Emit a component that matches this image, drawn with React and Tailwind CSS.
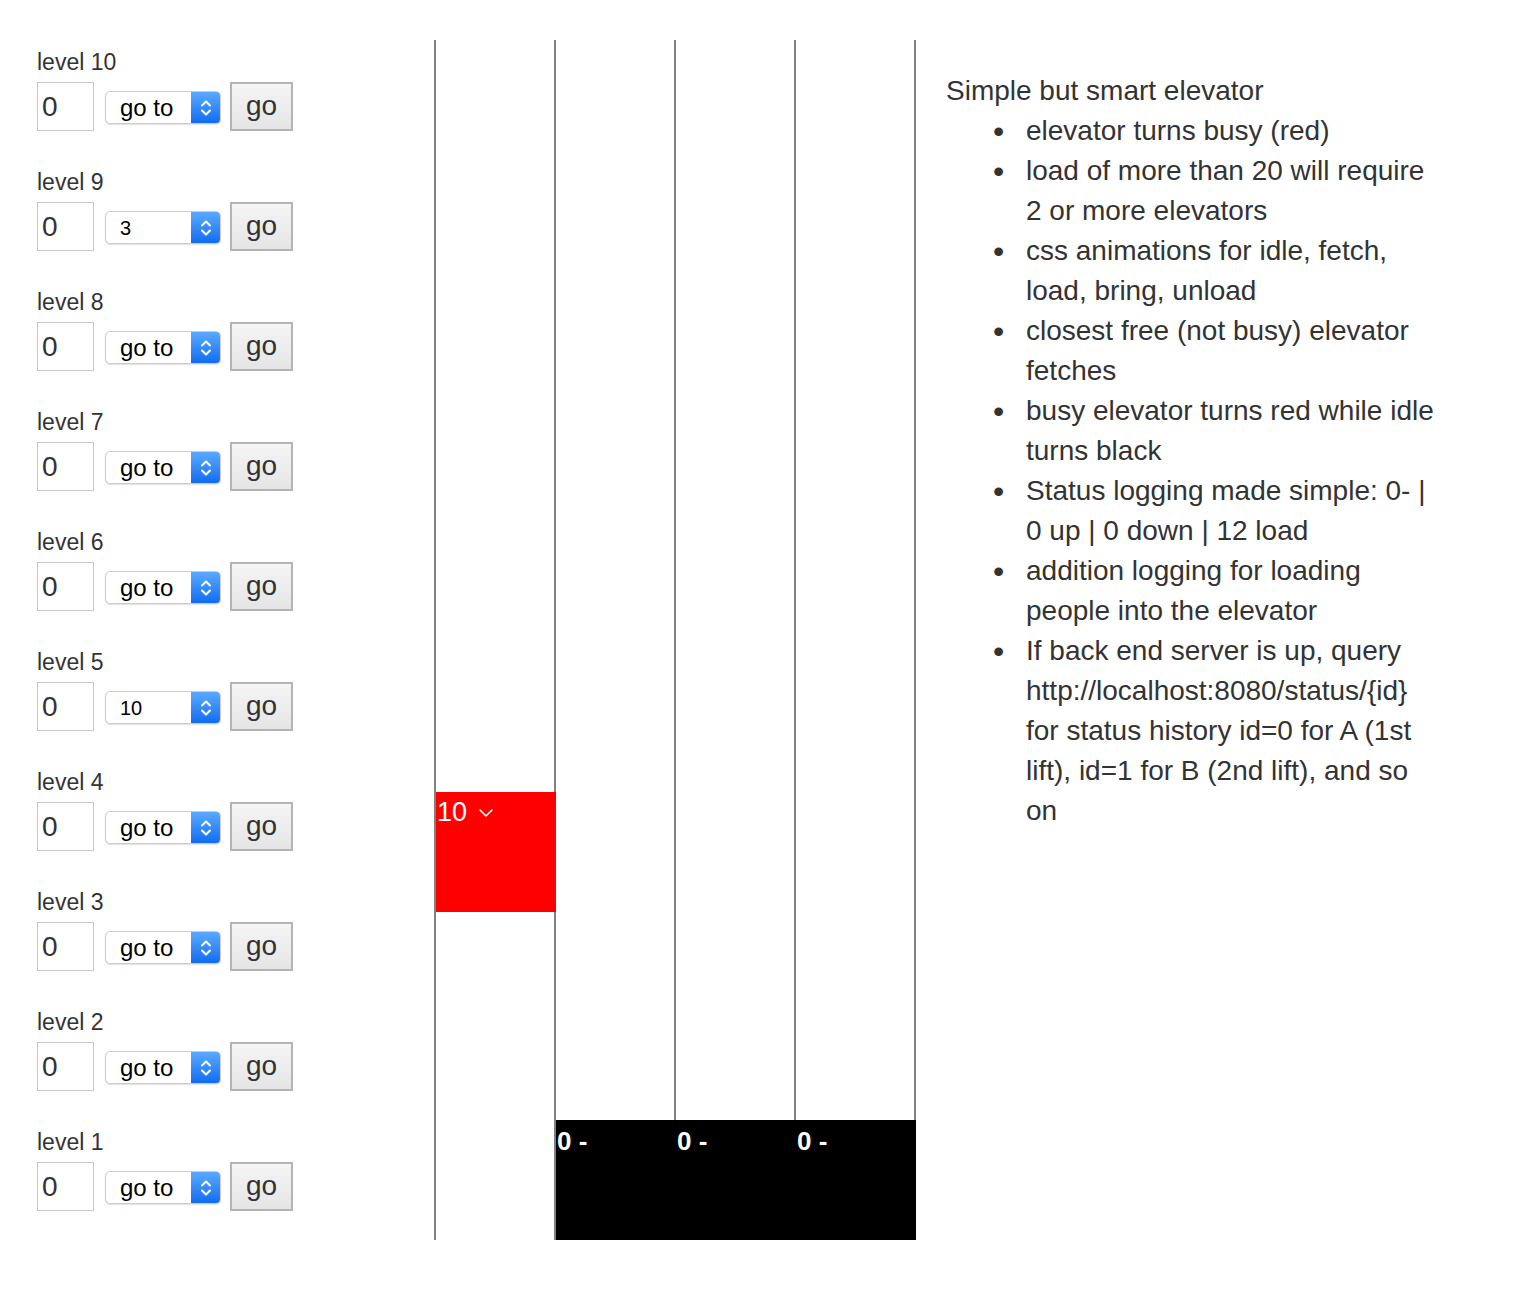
import React from "react";

const levels = [10, 9, 8, 7, 6, 5, 4, 3, 2, 1];
const selected = { 9: "3", 5: "10" };

const items = [
  "elevator turns busy (red)",
  "load of more than 20 will require 2 or more elevators",
  "css animations for idle, fetch, load, bring, unload",
  "closest free (not busy) elevator fetches",
  "busy elevator turns red while idle turns black",
  "Status logging made simple: 0- | 0 up | 0 down | 12 load",
  "addition logging for loading people into the elevator",
  "If back end server is up, query http://localhost:8080/status/{id} for status history id=0 for A (1st lift), id=1 for B (2nd lift), and so on",
];

function SelectBox({ value }) {
  const isGoTo = !value;
  return (
    <div className="mt-[9px] ml-[11px] flex h-[33px] w-[116px] overflow-hidden rounded-[5px] border border-[#cdcdcd] bg-white shadow-[0_1px_1px_rgba(0,0,0,0.12)]">
      <div className="flex flex-1 items-center pl-[14px]">
        <span
          className={
            isGoTo
              ? "text-[24px] leading-none text-black"
              : "text-[20px] leading-none text-black"
          }
        >
          {value || "go to"}
        </span>
      </div>
      <div className="flex w-[29px] items-center justify-center bg-gradient-to-b from-[#5aa9ff] to-[#0c6cf2]">
        <svg width="14" height="22" viewBox="0 0 14 22" fill="none">
          <path d="M3 8.5 L7 4.5 L11 8.5" stroke="white" strokeWidth="2" strokeLinecap="round" strokeLinejoin="round" />
          <path d="M3 13.5 L7 17.5 L11 13.5" stroke="white" strokeWidth="2" strokeLinecap="round" strokeLinejoin="round" />
        </svg>
      </div>
    </div>
  );
}

function Level({ n }) {
  return (
    <div className="h-[120px]">
      <div className="h-[42px] pt-[9px] text-[23px] leading-[26px] text-[#333]">level {n}</div>
      <div className="flex items-start">
        <div className="flex h-[49px] w-[57px] items-center border border-[#c6c6c6] bg-white pl-[4px] text-[28px] leading-none text-[#333]">
          0
        </div>
        <SelectBox value={selected[n]} />
        <div className="ml-[9px] flex h-[49px] w-[63px] items-center justify-center border-2 border-[#b4b4b4] bg-gradient-to-b from-[#f5f5f5] to-[#e5e5e5] pb-[2px] text-[28px] leading-none text-[#333]">
          go
        </div>
      </div>
    </div>
  );
}

function Shaft({ last, car }) {
  return (
    <div
      className={
        last
          ? "relative h-[1200px] w-[122px] border-x-2 border-[#808080]"
          : "relative h-[1200px] w-[120px] border-l-2 border-[#808080]"
      }
    >
      {car}
    </div>
  );
}

function RedCar() {
  return (
    <div className="absolute left-0 top-[752px] z-10 flex h-[120px] w-[120px] items-start bg-[#ff0000] text-white">
      <span className="pl-[1px] text-[27px] leading-[40px]">10</span>
      <svg className="ml-[11px] mt-[16px]" width="16" height="10" viewBox="0 0 16 10" fill="none">
        <path d="M2 2 L8 8 L14 2" stroke="white" strokeWidth="1.6" strokeLinecap="round" strokeLinejoin="round" />
      </svg>
    </div>
  );
}

function BlackCar() {
  return (
    <div className="absolute left-0 top-[1080px] z-10 h-[120px] w-[120px] bg-black text-white">
      <span className="whitespace-pre pl-[1px] text-[26px] font-semibold leading-[42px]">0 -</span>
    </div>
  );
}

export default function App() {
  return (
    <div
      className="flex min-h-[1302px] bg-white pt-[40px] text-[#333]"
      style={{ fontFamily: '"Liberation Sans", Arial, sans-serif' }}
    >
      <div className="w-[434px] shrink-0 pl-[37px]">
        {levels.map((n) => (
          <Level key={n} n={n} />
        ))}
      </div>
      <div className="flex shrink-0 items-start">
        <Shaft car={<RedCar />} />
        <Shaft car={<BlackCar />} />
        <Shaft car={<BlackCar />} />
        <Shaft last car={<BlackCar />} />
      </div>
      <div className="ml-[30px] pt-[31px] text-[28px] leading-[40px] text-[#333]">
        <div>Simple but smart elevator</div>
        <ul className="w-[496px] pl-[80px]">
          {items.map((t, i) => (
            <li key={i} className="-ml-[34px] flex">
              <span className="w-[34px] shrink-0 pl-[1px] text-[32px] leading-[40px]">•</span>
              <span className="flex-1">{t}</span>
            </li>
          ))}
        </ul>
      </div>
    </div>
  );
}
